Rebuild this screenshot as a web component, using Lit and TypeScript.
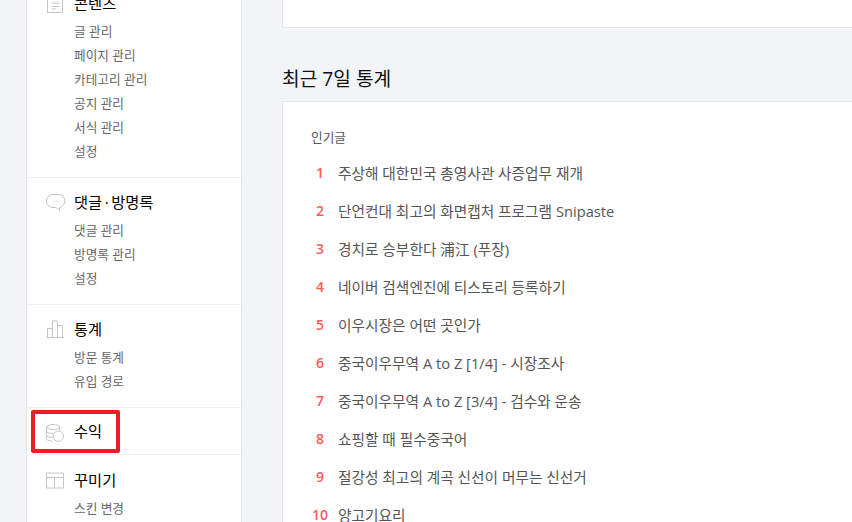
import { LitElement, html, css, svg } from 'lit';
import { customElement } from 'lit/decorators.js';

const icons: Record<string, unknown> = {
  doc: svg`<path d="M1.5 2.5h15v16h-15z"/><path d="M5.5 9h8.5M5.5 12.5h8.5M5.5 15h4.5"/>`,
  chat: svg`<path d="M7 1.5h5.5a6.5 6.5 0 0 1 1 12.9v3.1l-3.5-3H7a6.5 6.5 0 0 1 0-13z"/><path d="M7.5 8.2h1M10.5 8.2h1M13.5 8.2h1"/>`,
  bars: svg`<path d="M0 17.5h18M1.5 17.5v-9h5v9M6.5 17.5V1h5v16.5M11.5 17.5V5.5h5v12"/>`,
  coins: svg`<ellipse cx="7" cy="5" rx="6.5" ry="2.5"/><path d="M.5 5v11.5c0 1.4 2.5 2.5 6 2.5M.5 9c0 1.4 2.5 2.5 6.5 2.5M.5 13c0 1.4 2.5 2.5 6 2.5M13.5 5v3.5"/><circle cx="12.3" cy="14.2" r="5.2"/>`,
  layout: svg`<path d="M.5 2h17v15H.5zM.5 6.5h17M8.5 6.5V17"/>`,
};

const sections = [
  { cls: 's-first', icon: 'doc', title: html`콘텐츠`, items: ['글 관리', '페이지 관리', '카테고리 관리', '공지 관리', '서식 관리', '설정'] },
  { cls: '', icon: 'chat', title: html`댓글<span class="dot">·</span>방명록`, items: ['댓글 관리', '방명록 관리', '설정'] },
  { cls: '', icon: 'bars', title: html`통계`, items: ['방문 통계', '유입 경로'] },
  { cls: 's-single', icon: 'coins', title: html`수익`, items: [] },
  { cls: 's-last', icon: 'layout', title: html`꾸미기`, items: ['스킨 변경'] },
];

const posts = [
  '주상해 대한민국 총영사관 사증업무 재개',
  '단언컨대 최고의 화면캡처 프로그램 Snipaste',
  '경치로 승부한다 浦江 (푸장)',
  '네이버 검색엔진에 티스토리 등록하기',
  '이우시장은 어떤 곳인가',
  '중국이우무역 A to Z [1/4] - 시장조사',
  '중국이우무역 A to Z [3/4] - 검수와 운송',
  '쇼핑할 때 필수중국어',
  '절강성 최고의 계곡 신선이 머무는 신선거',
  '양고기요리',
];

@customElement('app-root')
export class AppRoot extends LitElement {
  static styles = css`
    :host {
      display: block;
      position: relative;
      width: 852px;
      height: 522px;
      overflow: hidden;
      background: #f3f4f7;
      font-family: 'Open Sans', 'Noto Sans CJK KR', sans-serif;
    }
    .page {
      display: flex;
      align-items: flex-start;
      height: 522px;
      overflow: hidden;
      padding-left: 26px;
      box-sizing: border-box;
    }
    .side {
      width: 216px;
      flex: none;
      box-sizing: border-box;
      background: #fff;
      border-left: 1px solid #e3e5ec;
      border-right: 1px solid #e3e5ec;
      height: 522px;
      overflow: hidden;
    }
    .sec {
      border-bottom: 1px solid #f1f1f4;
      padding: 13px 0 14px;
    }
    .s-first {
      margin-top: -8px;
      padding-top: 0;
    }
    .s-single {
      padding: 12px 0;
    }
    .s-last {
      border-bottom: 0;
      padding-top: 14px;
    }
    .title {
      display: flex;
      align-items: center;
      height: 22px;
      font-size: 15.3px;
      line-height: 22px;
      color: #000;
    }
    .dot {
      padding: 0 2.5px;
    }
    .title svg {
      width: 18px;
      height: 19px;
      margin-left: 19px;
      margin-right: 10px;
      fill: none;
      stroke: #c4c4c4;
      stroke-width: 1;
      overflow: visible;
      flex: none;
    }
    .items {
      list-style: none;
      margin: 5px 0 0;
      padding: 0 0 0 47px;
    }
    .items li {
      height: 24px;
      font-size: 12.7px;
      line-height: 24px;
      color: #666;
    }
    .main {
      flex: 1;
      min-width: 0;
      padding-left: 40px;
    }
    .card {
      background: #fff;
      border: 1px solid #e3e5ec;
      border-right: 0;
    }
    .top {
      height: 40px;
      margin-top: -14px;
    }
    h2 {
      margin: 36px 0 7px;
      font-size: 19.2px;
      line-height: 30px;
      font-weight: 400;
      color: #111;
    }
    .stats {
      padding: 25px 28px 0;
      height: 500px;
    }
    .label {
      font-size: 12.7px;
      line-height: 20px;
      color: #555;
    }
    ol {
      list-style: none;
      margin: 6px 0 0;
      padding: 0;
    }
    ol li {
      display: flex;
      height: 38px;
      align-items: center;
      font-size: 14.7px;
      color: #555;
    }
    .num {
      width: 18px;
      margin-right: 9px;
      text-align: center;
      font-size: 14px;
      font-weight: 600;
      color: #ff5a5a;
      flex: none;
    }
    .mark {
      position: absolute;
      left: 31px;
      top: 410px;
      width: 89px;
      height: 43px;
      box-sizing: border-box;
      border: 4px solid #ee1c25;
      border-radius: 2px;
    }
  `;

  render() {
    return html`
      <div class="page">
        <nav class="side">
          ${sections.map(
            (s) => html`
              <div class="sec ${s.cls}">
                <div class="title">
                  <svg viewBox="0 0 18 19">${icons[s.icon]}</svg>
                  <span>${s.title}</span>
                </div>
                ${s.items.length
                  ? html`<ul class="items">${s.items.map((i) => html`<li>${i}</li>`)}</ul>`
                  : ''}
              </div>
            `,
          )}
        </nav>
        <main class="main">
          <div class="card top"></div>
          <h2>최근 7일 통계</h2>
          <div class="card stats">
            <div class="label">인기글</div>
            <ol>
              ${posts.map(
                (p, i) => html`<li><span class="num">${i + 1}</span><span>${p}</span></li>`,
              )}
            </ol>
          </div>
        </main>
      </div>
      <div class="mark"></div>
    `;
  }
}
